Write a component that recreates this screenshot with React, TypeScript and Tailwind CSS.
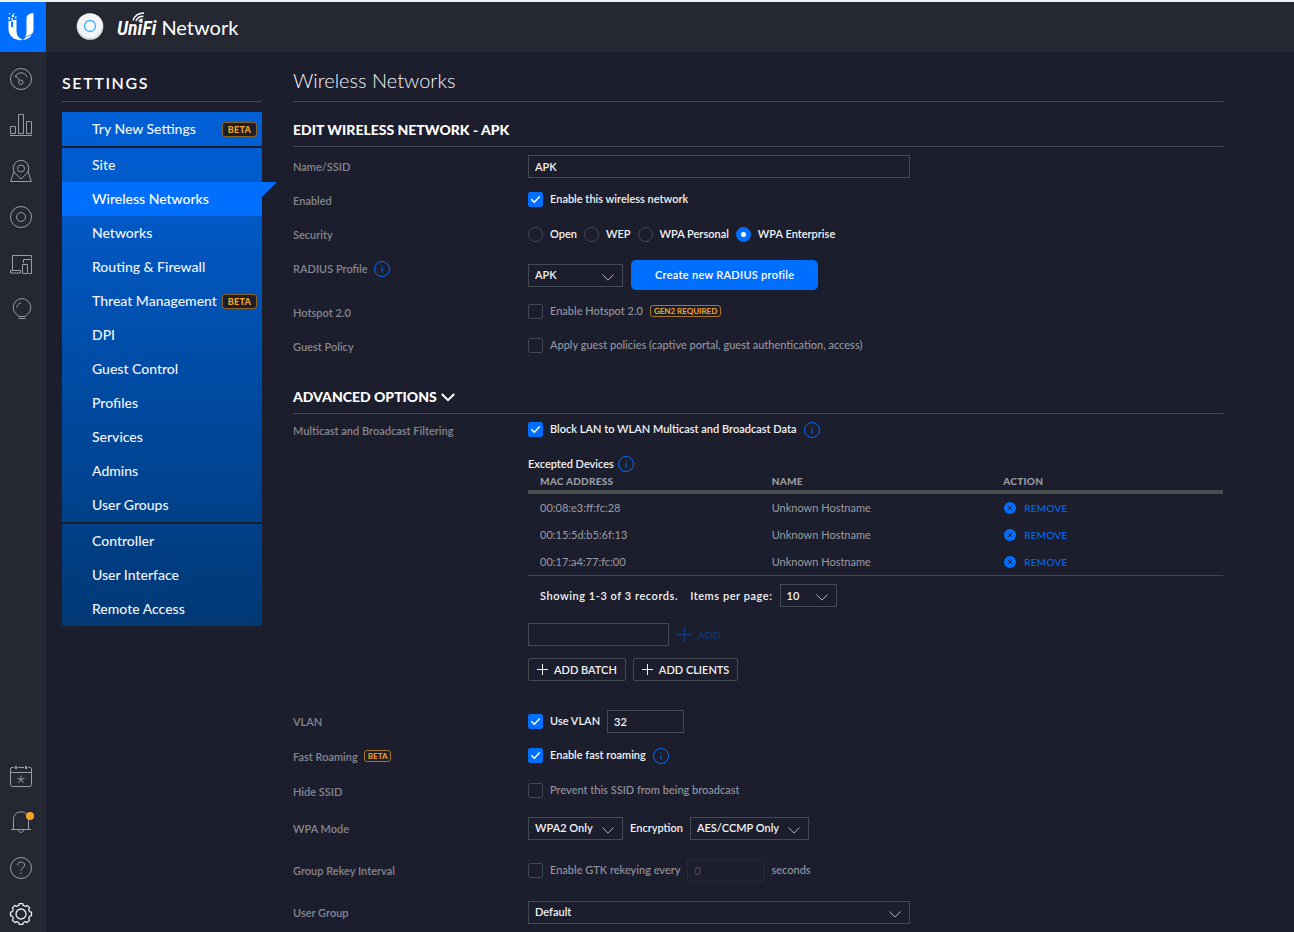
import { useState, type ReactNode } from "react";

const settingsGroups: { label: string; beta?: boolean }[][] = [
  [{ label: "Try New Settings", beta: true }],
  [
    { label: "Site" },
    { label: "Wireless Networks" },
    { label: "Networks" },
    { label: "Routing & Firewall" },
    { label: "Threat Management", beta: true },
    { label: "DPI" },
    { label: "Guest Control" },
    { label: "Profiles" },
    { label: "Services" },
    { label: "Admins" },
    { label: "User Groups" },
  ],
  [{ label: "Controller" }, { label: "User Interface" }, { label: "Remote Access" }],
];

const devices = ["00:08:e3:ff:fc:28", "00:15:5d:b5:6f:13", "00:17:a4:77:fc:00"];

function RailButton({ label, active, children }: { label: string; active?: boolean; children: ReactNode }) {
  return (
    <button
      type="button"
      aria-label={label}
      className={active ? "relative size-[22px] text-[#eceef2]" : "relative size-[22px] text-[#9a9ca8]"}
    >
      <svg viewBox="0 0 22 22" className="size-full overflow-visible" fill="none" stroke="currentColor" strokeWidth="1">
        {children}
      </svg>
    </button>
  );
}

function gearPath() {
  const teeth = 8;
  const points: string[] = [];
  for (let i = 0; i < teeth; i++) {
    const base = (i * 2 * Math.PI) / teeth - Math.PI / 2;
    const at = (r: number, a: number) =>
      `${(11 + r * Math.cos(base + a)).toFixed(2)} ${(11 + r * Math.sin(base + a)).toFixed(2)}`;
    points.push(`${i === 0 ? "M" : "L"}${at(10.6, -0.17)} L${at(10.6, 0.17)} Q${at(8.6, 0.2)} ${at(8.7, 0.39)} Q${at(8.6, 0.585)} ${at(10.6, 0.615)}`);
  }
  return points.join(" ") + "Z";
}

function IconRail() {
  return (
    <nav aria-label="Main" className="flex w-[46px] shrink-0 flex-col justify-between bg-[#252733] pt-4 pb-[7px] pl-[10px]">
      <div className="flex flex-col gap-6">
        <RailButton label="Dashboard">
          <circle cx="11" cy="11" r="10.5" />
          <path d="M4.8 9.2C6 6.4 8.3 4.8 11 4.8s5 1.6 6.2 4.4M6 7.8l3.6 4.6" />
          <circle cx="10.8" cy="14.2" r="2.2" />
        </RailButton>
        <RailButton label="Statistics">
          <path d="M.5 12.5h5v7h-5zM8.500 .5h5v19h-5zM16.500 7.500h5v12h-5zM0 21.500h22" />
        </RailButton>
        <RailButton label="Map">
          <circle cx="11" cy="8.500" r="3.500" />
          <path d="M11 19 5.200 13.400A7.800 7.800 0 1 1 16.800 13.400ZM4 11.500 .6 21.500h20.800L18 11.500" />
        </RailButton>
        <RailButton label="Devices">
          <circle cx="11" cy="11" r="10.500" />
          <circle cx="11" cy="11" r="4.500" />
        </RailButton>
        <RailButton label="Clients">
          <path d="M2.500 18.500v-15h19v3M.5 18.500h10v2.500H.5zM13.500 11V7.500h8v14h-3M12.500 12.500h5v9h-5z" />
        </RailButton>
        <RailButton label="Insights">
          <path d="M8.500 18.500c0-1-1-1.500-2.200-2.400a8.800 8.800 0 1 1 11.400 0c-1.200.9-2.200 1.400-2.200 2.400zM8.500 20.500h7M6.700 9.500c.2-2.300 1.800-4 4.300-4.400" />
        </RailButton>
      </div>
      <div className="flex flex-col gap-6">
        <RailButton label="Events">
          <path d="M4 2.500H2A1.500 1.500 0 0 0 .5 4v15.500A2 2 0 0 0 2.500 21.500h17a2 2 0 0 0 2-2V4A1.500 1.500 0 0 0 20 2.500h-2M8 2.500h6M.5 7.500h21" />
          <path d="M6 1v3M16 1v3" strokeWidth="2" />
          <path d="M11 10.500v4M11 14.500l-3.600-1.200M11 14.500l3.600-1.200M11 14.500l-2.300 3.200M11 14.500l2.300 3.200" />
        </RailButton>
        <RailButton label="Alerts">
          <path d="M1 18.500h20M3.500 18.500V8.600C3.500 4 6.700.8 11 .8s7.500 3.200 7.500 7.800v9.900M8.500 18.800c.2 3.400 4.800 3.400 5 0" />
          <circle cx="20" cy="5" r="4" fill="#f5a623" stroke="none" />
        </RailButton>
        <RailButton label="Help">
          <circle cx="11" cy="11" r="10.500" />
          <path d="M7.600 8.400c0-2.200 1.500-3.400 3.500-3.400s3.500 1.200 3.500 3.100c0 2.700-3.600 2.800-3.600 5.600M11 15.500v1.600" />
        </RailButton>
        <RailButton label="Settings" active>
          <path d={gearPath()} strokeWidth="1.300" strokeLinejoin="round" />
          <circle cx="11" cy="11" r="5" strokeWidth="1.300" />
        </RailButton>
      </div>
    </nav>
  );
}

function Header() {
  return (
    <header className="flex h-[50px] items-stretch bg-[#252733]">
      <a href="#home" aria-label="Home" className="flex w-[46px] shrink-0 justify-center bg-[#006fff] pt-[10px] pr-1">
        <svg viewBox="0 0 28 30" className="h-[30px] w-7" fill="#fff">
          <path d="M1.500 9h2.600v6H6V8h3.500v11c0 3 .9 5.300 3.500 7.300 1 .8 2 1.300 3.200 1.700C8 29 1.500 24.500 1.500 17z" />
          <path d="M19.500 6.500C19.500 3.200 22 1.200 26.500 1.200V17c0 1.500-.3 3-.9 4.300-1.900 1.500-5 2.200-8 4.500 1.300-1.600 1.900-3.700 1.900-6.500z" />
          <path d="M25 22.500c-1.900 3.300-5.500 5.200-9.200 5.600 2.400-3 6.100-3.800 9.200-5.600z" />
          <path d="M2 1h1.200v1.200H2zM5 2.500h2V5H5zM1.500 5h1.600v2.500H1.500zM8 4.500h1.500v2H8zM4.500 6h1.200v4H4.500zM6.500 1h1v1h-1z" />
        </svg>
      </a>
      <div className="flex items-center gap-[13px] pl-[30px]">
        <svg viewBox="0 0 28 28" className="size-7" aria-hidden="true">
          <defs>
            <linearGradient id="puck" x1="0" y1="0" x2="0" y2="1">
              <stop offset="0" stopColor="#fff" />
              <stop offset="1" stopColor="#d3d5da" />
            </linearGradient>
          </defs>
          <circle cx="14" cy="13.500" r="13.300" fill="url(#puck)" />
          <circle cx="14" cy="13.300" r="11.500" fill="#f3f4f6" />
          <circle cx="14" cy="13" r="5.500" fill="#f6f9fc" stroke="#3bb0f5" strokeWidth="1.300" />
        </svg>
        <div className="flex items-baseline gap-[5px] text-white">
          <span className="relative font-['Roboto_Condensed','Open_Sans_Condensed','Liberation_Sans',sans-serif] text-[20px] leading-6 font-semibold italic">
            UniFi
            <svg viewBox="0 0 14 10" className="absolute -top-[4px] left-[15px] h-[10px] w-[14px]" fill="none" stroke="#fff" strokeWidth="1.400" aria-hidden="true">
              <path d="M1 8.500C2.500 4 6.500 1 12 1M3.800 9C5 6 7.500 4.200 11.400 4.200M6.800 9.300C7.500 8 8.800 7.300 10.800 7.300" />
            </svg>
          </span>
          <span className="text-[20px] leading-6">Network</span>
        </div>
      </div>
    </header>
  );
}

function SettingsMenu() {
  return (
    <aside className="w-[200px] shrink-0">
      <h2 className="h-[50px] border-b border-[#42454f] pt-[19px] text-base leading-6 font-semibold tracking-widest text-white">SETTINGS</h2>
      <nav aria-label="Settings" className="mt-[10px] bg-linear-to-b/srgb from-[#0060d8] to-[#003874]">
        {settingsGroups.map((group, i) => (
          <ul key={i} className="border-b-2 border-[#1c1e2d] last:border-b-0">
            {group.map((item) => {
              const active = item.label === "Wireless Networks";
              return (
                <li key={item.label}>
                  <a
                    href="#settings"
                    aria-current={active ? "page" : undefined}
                    className={
                      active
                        ? "relative flex h-[34px] items-center bg-[#006fff] pr-[5px] pl-[30px] text-sm font-medium text-white"
                        : "relative flex h-[34px] items-center justify-between pr-[5px] pl-[30px] text-sm font-medium text-[#f0f4fa]"
                    }
                  >
                    {item.label}
                    {item.beta && (
                      <span className="rounded-[3px] border border-[#8a6220] bg-[#1c1e2d] px-[5px] text-[9px] leading-[13px] font-black tracking-wide text-[#f5a623]">
                        BETA
                      </span>
                    )}
                    {active && (
                      <svg viewBox="0 0 15 15" className="absolute top-0 left-full size-[15px]" fill="#006fff" aria-hidden="true">
                        <path d="M0 0h15L0 15z" />
                      </svg>
                    )}
                  </a>
                </li>
              );
            })}
          </ul>
        ))}
      </nav>
    </aside>
  );
}

function Info({ label }: { label: string }) {
  return (
    <button type="button" aria-label={label} className="size-4 shrink-0">
      <svg viewBox="0 0 16 16" className="size-full" fill="none" stroke="#006fff">
        <circle cx="8" cy="8" r="7.500" />
        <path d="M8 7v4.500M8 4.500v1.200" />
      </svg>
    </button>
  );
}

function Tag({ children }: { children: ReactNode }) {
  return (
    <span className="mb-[2px] rounded-[3px] border border-[#a87322] px-[3px] text-[8px] leading-[10px] font-bold text-[#f5a623]">{children}</span>
  );
}

function Check({ id, label, checked = false }: { id: string; label: string; checked?: boolean }) {
  const [on, setOn] = useState(checked);
  return (
    <span className="flex items-center gap-[7px]">
      <span className="grid size-[15px] shrink-0">
        <input
          id={id}
          type="checkbox"
          checked={on}
          onChange={(e) => setOn(e.target.checked)}
          className="col-start-1 row-start-1 size-[15px] appearance-none rounded-[2px] border border-[#3d4a50] checked:border-[#006fff] checked:bg-[#006fff]"
        />
        {on && (
          <svg viewBox="0 0 15 15" className="pointer-events-none col-start-1 row-start-1 size-[15px]" fill="none" stroke="#fff" strokeWidth="1.500">
            <path d="m3.300 7.300 3 3 5.500-5.800" />
          </svg>
        )}
      </span>
      <label htmlFor={id} className={on ? "pb-px leading-[14px] font-semibold text-[#f2f3f5]" : "pb-px leading-[14px] font-medium text-[#9496a0]"}>
        {label}
      </label>
    </span>
  );
}

function Select({ label, options, className }: { label: string; options: string[]; className: string }) {
  return (
    <span className={`relative flex ${className}`}>
      <select
        aria-label={label}
        className="h-[23px] w-full appearance-none border border-[#434c53] bg-transparent pr-6 pl-[6px] font-semibold text-[#f2f3f5]"
      >
        {options.map((o) => (
          <option key={o} className="bg-[#1c1e2d]">
            {o}
          </option>
        ))}
      </select>
      <svg viewBox="0 0 12 7" className="pointer-events-none absolute top-[10px] right-[9px] h-[7px] w-3" fill="none" stroke="#b4b6bd" aria-hidden="true">
        <path d="m.4.500 5.600 5.600L11.600.5" />
      </svg>
    </span>
  );
}

function Row({ label, extra, height, children }: { label: string; extra?: ReactNode; height: string; children: ReactNode }) {
  return (
    <div className={`flex ${height}`}>
      <div className="flex h-[34px] w-[235px] shrink-0 items-center gap-[6px] font-semibold text-[#858790]">
        {label}
        {extra}
      </div>
      <div className="min-w-0 flex-1">{children}</div>
    </div>
  );
}

const line = "flex h-8 items-center";
const checkLine = "flex h-[31px] items-center";
const box = "h-[23px] border border-[#434c53] bg-transparent px-[6px] font-semibold text-[#f2f3f5]";

function Plus({ className }: { className: string }) {
  return (
    <svg viewBox="0 0 11 11" className={className} fill="none" stroke="currentColor" aria-hidden="true">
      <path d="M5.500 0v11M0 5.500h11" />
    </svg>
  );
}

function SecurityOptions() {
  const [mode, setMode] = useState("WPA Enterprise");
  return (
    <div role="radiogroup" aria-label="Security" className={`${line} gap-[7px]`}>
      {["Open", "WEP", "WPA Personal", "WPA Enterprise"].map((name) => (
        <label key={name} className="flex items-center gap-[7px] font-semibold text-[#f2f3f5]">
          <input
            type="radio"
            name="security"
            checked={mode === name}
            onChange={() => setMode(name)}
            className="size-[15px] appearance-none rounded-full border border-[#434c53] checked:border-5 checked:border-[#006fff] checked:bg-white"
          />
          {name}
        </label>
      ))}
    </div>
  );
}

function ExceptedDevices() {
  return (
    <>
      <div className="flex h-5 items-center gap-1 font-semibold text-[#f2f3f5]">
        Excepted Devices
        <Info label="About excepted devices" />
      </div>
      <table className="w-full table-fixed border-separate border-spacing-0 text-left">
        <thead>
          <tr className="text-[10px] leading-3 text-[#9b9da4]">
            {["MAC ADDRESS", "NAME", "ACTION"].map((name) => (
              <th key={name} className="h-5 border-b-4 border-[#4a504f] pt-px pb-[3px] pl-3 font-black tracking-wide">
                {name}
              </th>
            ))}
          </tr>
        </thead>
        <tbody>
          {devices.map((mac) => (
            <tr key={mac} className="h-[27px] text-[#9b9da4] last:h-7 last:[&>td]:border-b">
              <td className="border-[#42454f] pt-px pl-3">{mac}</td>
              <td className="border-[#42454f] pt-px pl-3">Unknown Hostname</td>
              <td className="border-[#42454f] pl-3">
                <button type="button" className="flex items-center gap-2 text-[10px] leading-4 tracking-wide text-[#006fff]">
                  <svg viewBox="0 0 12 12" className="ml-px size-3" aria-hidden="true">
                    <circle cx="6" cy="6" r="6" fill="#006fff" />
                    <path d="m3.800 3.800 4.400 4.400m0-4.400L3.800 8.200" stroke="#1c1e2d" />
                  </svg>
                  REMOVE
                </button>
              </td>
            </tr>
          ))}
        </tbody>
      </table>
      <div className="mt-2 flex h-[23px] items-center pl-3 font-semibold text-[#f2f3f5]">
        <span className="tracking-wider">Showing 1-3 of 3 records.</span>
        <span className="mr-[7px] ml-3 tracking-wider">Items per page:</span>
        <Select label="Items per page" options={["10", "50", "100"]} className="w-[57px]" />
      </div>
      <div className="mt-4 flex items-center">
        <input aria-label="MAC address" className={`${box} w-[141px]`} />
        <button type="button" disabled className="ml-2 flex items-center gap-[6px] text-[10px] tracking-wide text-[#12397d]">
          <Plus className="size-[15px]" />
          ADD
        </button>
      </div>
      <div className="mt-3 flex gap-[7px] font-semibold text-[#f2f3f5]">
        <button type="button" className="flex h-[23px] items-center gap-[6px] rounded-[2px] border border-[#434c53] px-2">
          <Plus className="size-[11px]" />
          ADD BATCH
        </button>
        <button type="button" className="flex h-[23px] items-center gap-[6px] rounded-[2px] border border-[#434c53] px-2">
          <Plus className="size-[11px]" />
          ADD CLIENTS
        </button>
      </div>
    </>
  );
}

export default function App() {
  return (
    <div className="flex min-h-screen flex-col border-t-2 border-[#eef0f3] bg-[#1c1e2d] font-[Lato,sans-serif] text-[11px] leading-4">
      <Header />
      <div className="flex flex-1">
        <IconRail />
        <div className="flex min-w-0 flex-1 pr-[71px] pl-4">
          <SettingsMenu />
          <main className="ml-[31px] min-w-0 flex-1">
            <h1 className="h-[50px] border-b border-[#42454f] pt-[14px] text-[20px] leading-7 font-light text-[#f4f5f8]">Wireless Networks</h1>
            <h2 className="mb-[3px] h-[45px] border-b border-[#42454f] pt-[18px] text-sm leading-5 font-black text-white">
              EDIT WIRELESS NETWORK - APK
            </h2>
            <Row label="Name/SSID" height="h-[34px]">
              <div className={line}>
                <input aria-label="Name/SSID" defaultValue="APK" className={`${box} w-[382px]`} />
              </div>
            </Row>
            <Row label="Enabled" height="h-[34px]">
              <div className={checkLine}>
                <Check id="enabled" label="Enable this wireless network" checked />
              </div>
            </Row>
            <Row label="Security" height="h-[34px]">
              <SecurityOptions />
            </Row>
            <Row label="RADIUS Profile" extra={<Info label="About RADIUS profiles" />} height="h-11">
              <div className="flex h-[46px] items-center gap-2">
                <Select label="RADIUS Profile" options={["APK"]} className="w-[95px]" />
                <button type="button" className="h-[30px] rounded-[5px] bg-[#006fff] px-6 font-semibold tracking-wide text-white">
                  Create new RADIUS profile
                </button>
              </div>
            </Row>
            <Row label="Hotspot 2.0" height="h-[34px]">
              <div className={`${checkLine} gap-[7px]`}>
                <Check id="hotspot" label="Enable Hotspot 2.0" />
                <Tag>GEN2 REQUIRED</Tag>
              </div>
            </Row>
            <Row label="Guest Policy" height="h-[34px]">
              <div className={checkLine}>
                <Check id="guest" label="Apply guest policies (captive portal, guest authentication, access)" />
              </div>
            </Row>
            <h2 className="h-[50px] border-b border-[#42454f] pt-[23px] leading-5">
              <button type="button" className="flex items-center gap-1 text-sm leading-5 font-black text-white">
                ADVANCED OPTIONS
                <svg viewBox="0 0 14 9" className="h-[9px] w-[14px]" fill="none" stroke="#fff" strokeWidth="2" aria-hidden="true">
                  <path d="m.8 1 6.200 6.200L13.200 1" />
                </svg>
              </button>
            </h2>
            <Row label="Multicast and Broadcast Filtering" height="min-h-[291px]">
              <div className={`${checkLine} mb-[9px] gap-[7px]`}>
                <Check id="block" label="Block LAN to WLAN Multicast and Broadcast Data" checked />
                <Info label="About multicast filtering" />
              </div>
              <ExceptedDevices />
            </Row>
            <Row label="VLAN" height="h-[35px]">
              <div className={`${line} gap-[7px]`}>
                <Check id="vlan" label="Use VLAN" checked />
                <input aria-label="VLAN ID" defaultValue="32" className={`${box} w-[77px]`} />
              </div>
            </Row>
            <Row label="Fast Roaming" extra={<Tag>BETA</Tag>} height="h-[35px]">
              <div className={`${checkLine} gap-[7px]`}>
                <Check id="roaming" label="Enable fast roaming" checked />
                <Info label="About fast roaming" />
              </div>
            </Row>
            <Row label="Hide SSID" height="h-[37px]">
              <div className={checkLine}>
                <Check id="hide" label="Prevent this SSID from being broadcast" />
              </div>
            </Row>
            <Row label="WPA Mode" height="h-[42px]">
              <div className={`${line} gap-[7px]`}>
                <Select label="WPA Mode" options={["WPA2 Only", "WPA1 Only", "Both"]} className="w-[95px]" />
                <span className="font-semibold text-[#f2f3f5]">Encryption</span>
                <Select label="Encryption" options={["AES/CCMP Only", "Auto"]} className="w-[119px]" />
              </div>
            </Row>
            <Row label="Group Rekey Interval" height="h-[42px]">
              <div className={`${line} gap-[7px]`}>
                <Check id="gtk" label="Enable GTK rekeying every" />
                <input
                  aria-label="Rekey interval"
                  disabled
                  defaultValue="0"
                  className="h-[23px] w-[77px] border border-[#262937] bg-transparent px-[6px] text-[#4b4d58]"
                />
                <span className="font-medium text-[#9496a0]">seconds</span>
              </div>
            </Row>
            <Row label="User Group" height="h-[34px]">
              <div className={line}>
                <Select label="User Group" options={["Default"]} className="w-[382px]" />
              </div>
            </Row>
          </main>
        </div>
      </div>
    </div>
  );
}
